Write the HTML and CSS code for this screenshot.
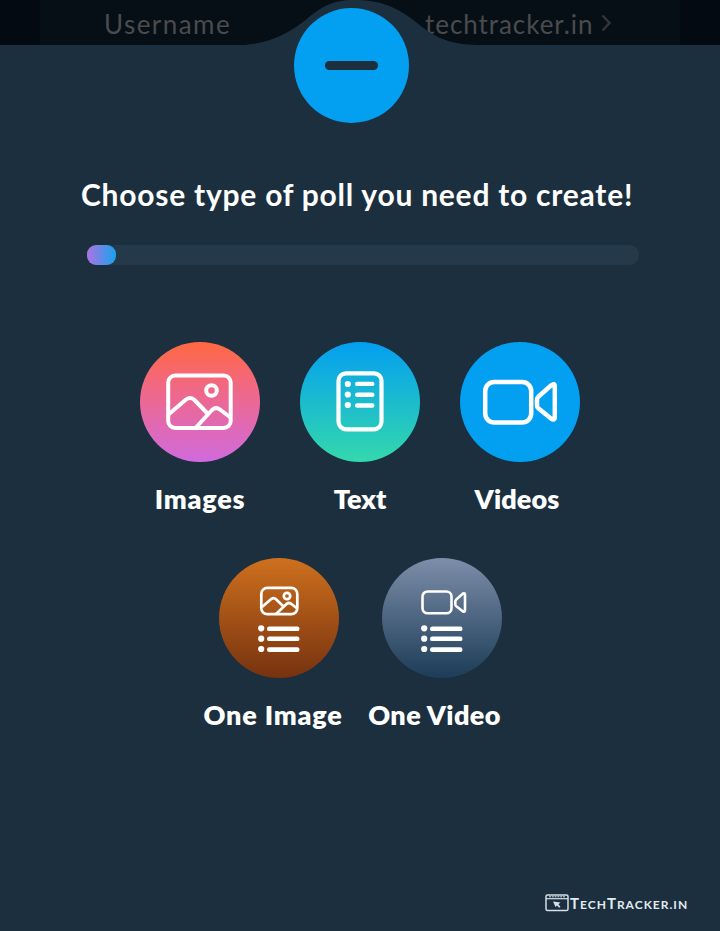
FILE: index.html
```
<!DOCTYPE html>
<html lang="en">
<head>
<meta charset="utf-8">
<title>Create a poll</title>
<link rel="stylesheet" href="styles.css">
</head>
<body>
<svg class="defs" aria-hidden="true">
  <symbol id="image" viewBox="0 0 68 58">
    <g fill="none" stroke="#fff" stroke-width="4" stroke-linejoin="round" stroke-linecap="butt">
      <rect x="2.200" y="2.500" width="62.500" height="52.500" rx="7"/>
      <circle cx="45.500" cy="17.500" r="5.300"/>
      <path d="M3 41 L20 26.500 Q24 23.500 28 26.500 L42 41"/>
      <path d="M29.500 55 L46 37 Q50 33.500 54 36.500 L64.500 44.500"/>
    </g>
  </symbol>
  <symbol id="video" viewBox="0 0 76 46">
    <g fill="none" stroke="#fff" stroke-width="4.500" stroke-linejoin="round">
      <rect x="3.200" y="3" width="46" height="40.500" rx="9"/>
      <path d="M56 18 L69 6.500 Q72.800 3.500 72.800 7.500 V38 Q72.800 42 69 39.500 L56 29 Q55 28 55 26 V21 Q55 19 56 18 Z"/>
    </g>
  </symbol>
  <symbol id="list" viewBox="0 0 42 28">
    <g fill="#fff">
      <circle cx="3.200" cy="3.300" r="3.100"/><circle cx="3.200" cy="13.700" r="3.100"/><circle cx="3.200" cy="24" r="3.100"/>
      <rect x="9" y="1.500" width="32.500" height="4.600" rx="2.200"/><rect x="9" y="11.500" width="32.500" height="4.600" rx="2.200"/><rect x="9" y="22.300" width="32.500" height="4.600" rx="2.200"/>
    </g>
  </symbol>
</svg>
<div class="screen">
  <header class="header">
    <div class="row">
      <span class="user">Username</span>
      <span class="site">techtracker.in</span>
      <svg class="chevron" width="10" height="18" viewBox="0 0 10 18"><path d="M1.500 1.500 L8.500 9 L1.500 16.500" fill="none" stroke="#323538" stroke-width="2.500"/></svg>
    </div>
    <svg class="hump" width="240" height="46" viewBox="240 0 240 46">
      <path d="M240 46 V45 C270 44 288 33 303 22 C320 8 330 0 354 0 C382 0 397 8 412 19 C431 34 444 45 480 45 V46 Z" fill="#1b2f3e"/>
    </svg>
    <button class="close" aria-label="Close"><span class="minus"></span></button>
  </header>
  <main class="main">
    <h1 class="title">Choose type of poll you need to create!</h1>
    <div class="progress"><div class="fill"></div></div>
    <div class="choices">
      <div class="choice images"><div class="disc"><svg width="68" height="58"><use href="#image"/></svg></div><span class="label">Images</span></div>
      <div class="choice text"><div class="disc">
        <svg width="48" height="62" viewBox="0 0 48 62">
          <rect x="2.500" y="2.300" width="43" height="56" rx="7.500" fill="none" stroke="#fff" stroke-width="4.200"/>
          <g fill="#fff"><circle cx="11.800" cy="13" r="3.100"/><circle cx="11.800" cy="23.500" r="3.100"/><circle cx="11.800" cy="34" r="3.100"/>
          <rect x="19" y="10.700" width="19.500" height="4.400" rx="2.200"/><rect x="19" y="21.500" width="19.500" height="4.400" rx="2.200"/><rect x="19" y="32.300" width="19.500" height="4.400" rx="2.200"/></g>
        </svg></div><span class="label">Text</span></div>
      <div class="choice videos"><div class="disc"><svg width="76" height="46"><use href="#video"/></svg></div><span class="label">Videos</span></div>
    </div>
    <div class="choices second">
      <div class="choice one-image"><div class="disc stack">
        <svg class="small" width="40" height="30" viewBox="0 0 40 30"><g fill="none" stroke="#fff" stroke-width="2.700" stroke-linejoin="round"><rect x="2.300" y="1.900" width="36" height="26.300" rx="6"/><circle cx="28" cy="10" r="3.200"/><path d="M3 21 L12.500 12.800 Q14.500 11.500 16.500 12.800 L24.500 20.500 M17 28 L27.500 18 Q30 16 32.500 18 L37.500 22"/></g></svg>
        <svg width="42" height="28"><use href="#list"/></svg></div><span class="label">One Image</span></div>
      <div class="choice one-video"><div class="disc stack">
        <svg class="small" width="46" height="25" viewBox="0 0 46 25"><g fill="none" stroke="#fff" stroke-width="2.600" stroke-linejoin="round"><rect x="1.500" y="1.500" width="29" height="21.800" rx="5"/><path d="M35 9.800 L42 3.500 Q44 2.500 44 5 V20 Q44 22.500 42 21.500 L35 16 Q34.300 15.400 34.300 14 V11.500 Q34.300 10.500 35 9.800 Z"/></g></svg>
        <svg width="42" height="28"><use href="#list"/></svg></div><span class="label">One Video</span></div>
    </div>
  </main>
  <footer class="footer">
    <svg width="24" height="18" viewBox="0 0 24 18"><rect x="1" y="1" width="22" height="15.500" rx="1.500" fill="none" stroke="#d5dfe6" stroke-width="1.500"/><path d="M1 4.700 H23" stroke="#d5dfe6" stroke-width="1.200"/><path d="M4 2.800 H20" stroke="#d5dfe6" stroke-width="1" stroke-dasharray="2 .8"/><path d="M8 7.500 L15.500 8.500 L13.500 10.200 L15.500 13 L14 13.800 L12 11.500 L10.500 13 Z" fill="#d5dfe6"/></svg>
    <span class="brand"><span class="cap">T</span>ech<span class="cap">T</span>racker.in</span>
  </footer>
</div>
</body>
</html>
```
FILE: styles.css
```
* { box-sizing: border-box; }
body { margin: 0; background: #1b2f3e; font-family: Lato, "Open Sans", sans-serif; color: #fff; }
.defs { position: absolute; width: 0; height: 0; }
.screen { width: 720px; height: 931px; display: flex; flex-direction: column; overflow: hidden; }
.header { position: relative; height: 45px; padding: 0 40px; background: #030a12; }
.row { height: 45px; padding-left: 64px; display: flex; align-items: flex-start; background: #060f15; color: #4a4b4d; font-size: 26px; font-weight: 400; line-height: 48px; white-space: nowrap; }
.user { width: 321px; letter-spacing: 1.450px; }
.site { width: 176px; letter-spacing: .95px; }
.chevron { margin-top: 14px; }
.hump { position: absolute; left: 240px; top: 0; }
.close { position: absolute; left: 294px; top: 8px; width: 115px; height: 115px; border: 0; padding: 0; border-radius: 50%; background: #039ff0; display: flex; align-items: center; justify-content: center; }
.minus { width: 53px; height: 9px; border-radius: 5px; background: #1b2f3e; }
.main { flex: 1; padding-top: 128px; }
.title { margin: 0 0 0 81px; height: 42px; font-size: 30px; line-height: 42px; font-weight: 700; letter-spacing: .76px; white-space: nowrap; }
.progress { margin: 30px 0 0 87px; width: 552px; height: 20px; border-radius: 9px; background: #24394a; }
.fill { width: 29px; height: 20px; border-radius: 9px; background: linear-gradient(90deg, #ae72e3, #16a4ee); }
.choices { margin: 77px 0 0 140px; display: flex; gap: 40px; }
.second { margin: 40px 0 0 219px; gap: 43px; }
.choice { width: 120px; height: 176px; display: flex; flex-direction: column; align-items: center; }
.disc { width: 120px; height: 120px; flex: none; border-radius: 50%; display: flex; align-items: center; justify-content: center; }
.stack { flex-direction: column; gap: 9px; padding-top: 2px; }
.one-video .stack { gap: 10px; padding-top: 6px; }
.one-video .small { margin-left: 3px; }
.label { margin-top: 19px; font-size: 27px; line-height: 36px; font-weight: 800; letter-spacing: .8px; white-space: nowrap; }
.images .disc { background: linear-gradient(#ff6841, #f26880 35%, #d16ade); }
.text .disc { background: linear-gradient(#039ff0, #34d8ac); }
.videos .disc { background: #039ff0; }
.one-image .disc { background: linear-gradient(#ce701e, #76320f); }
.one-video .disc { background: linear-gradient(#7d8ea9, #1c3c57); }
.text .label { letter-spacing: 0; }
.videos .label { margin-right: 6px; letter-spacing: .1px; }
.one-image .label { margin-right: 12px; }
.one-video .label { margin-right: 15px; letter-spacing: .4px; }
.footer { height: 40px; padding-left: 545px; display: flex; align-items: flex-start; gap: 1px; }
.footer svg { margin-top: 3px; flex: none; }
.brand { font-size: 12px; font-weight: 700; line-height: 24px; text-transform: uppercase; letter-spacing: 1px; color: #e2eaf0; white-space: nowrap; }
.cap { font-size: 15px; }
```
